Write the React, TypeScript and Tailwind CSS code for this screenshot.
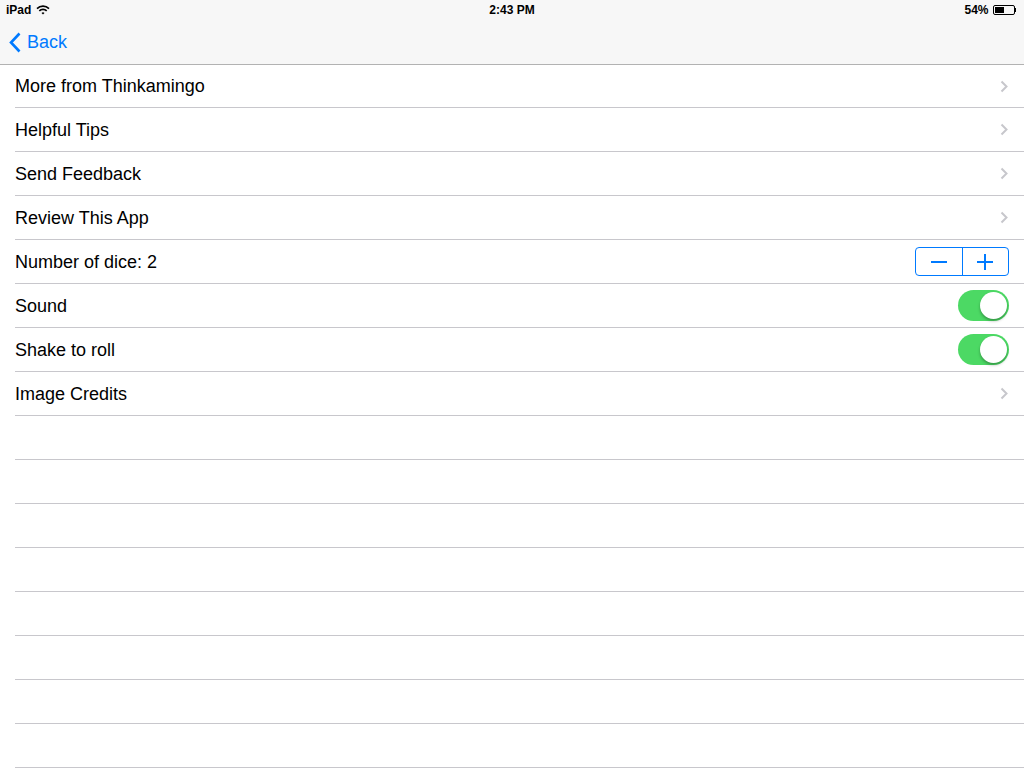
import { useState } from 'react';

const font = { fontFamily: '"Liberation Sans", Arial, sans-serif' };

function Chevron() {
  return (
    <svg width="8" height="13" viewBox="0 0 8 13" className="shrink-0 mr-[1px]">
      <path d="M1.5 1.5 L6.5 6.5 L1.5 11.5" fill="none" stroke="#c7c7cc" strokeWidth="2" strokeLinecap="butt" />
    </svg>
  );
}

function Toggle({ on, onClick }: { on: boolean; onClick: () => void }) {
  return (
    <button
      onClick={onClick}
      className={`relative w-[51px] h-[31px] rounded-full transition-colors ${on ? 'bg-[#4cd964]' : 'bg-[#e5e5ea]'}`}
    >
      <span
        className={`absolute top-[2px] w-[27px] h-[27px] rounded-full bg-white shadow-[0_2px_3px_rgba(0,0,0,0.3)] transition-all ${on ? 'left-[22px]' : 'left-[2px]'}`}
      />
    </button>
  );
}

function Row({ children, first }: { children: React.ReactNode; first?: boolean }) {
  return (
    <div className={`ml-[15px] pr-[15px] flex items-center justify-between border-b border-[#c8c7cc] ${first ? 'h-[43px]' : 'h-[44px]'}`}>
      {children}
    </div>
  );
}

export default function App() {
  const [dice, setDice] = useState(2);
  const [sound, setSound] = useState(true);
  const [shake, setShake] = useState(true);

  const links = ['More from Thinkamingo', 'Helpful Tips', 'Send Feedback', 'Review This App'];

  return (
    <div className="w-[1024px] h-[768px] bg-white overflow-hidden text-black" style={font}>
      <div className="h-[65px] bg-[#f7f7f7] border-b border-[#b2b2b2]">
        {/* status bar */}
        <div className="h-[20px] flex items-center justify-between px-[6px] text-[12px] font-bold relative">
          <div className="flex items-center gap-[5px]">
            <span>iPad</span>
            <svg width="14" height="10" viewBox="0 0 14 10">
              <path d="M1 3.6 A8.5 8.5 0 0 1 13 3.6" fill="none" stroke="#000" strokeWidth="1.6" />
              <path d="M3.3 5.9 A5.2 5.2 0 0 1 10.7 5.9" fill="none" stroke="#000" strokeWidth="1.6" />
              <path d="M5.5 8.1 L7 9.6 L8.5 8.1 A2.1 2.1 0 0 0 5.5 8.1 Z" fill="#000" />
            </svg>
          </div>
          <span className="absolute left-1/2 -translate-x-1/2">2:43 PM</span>
          <div className="flex items-center gap-[4px] pr-[2px]">
            <span>54%</span>
            <div className="flex items-center">
              <div className="w-[22px] h-[10px] border border-black rounded-[2px] p-[1px]">
                <div className="h-full w-[54%] bg-black" />
              </div>
              <div className="w-[1.5px] h-[4px] bg-black" />
            </div>
          </div>
        </div>
        {/* nav bar */}
        <div className="h-[44px] flex items-center pl-[9px] pt-[1px]">
          <button className="flex items-center gap-[6px] text-[#007aff] text-[18px]">
            <svg width="12" height="21" viewBox="0 0 12 21">
              <path d="M10.5 1.5 L2 10.5 L10.5 19.5" fill="none" stroke="#007aff" strokeWidth="2.6" />
            </svg>
            <span>Back</span>
          </button>
        </div>
      </div>

      <div className="text-[18px]">
        {links.map((l, i) => (
          <Row key={l} first={i === 0}>
            <span className="pt-[1px]">{l}</span>
            <Chevron />
          </Row>
        ))}
        <Row>
          <span className="pt-[1px]">Number of dice: {dice}</span>
          <div className="flex w-[94px] h-[29px] border border-[#007aff] rounded-[4px]">
            <button
              onClick={() => setDice(Math.max(1, dice - 1))}
              className="flex-1 flex items-center justify-center border-r border-[#007aff]"
            >
              <span className="block w-[16px] h-[2px] bg-[#007aff]" />
            </button>
            <button onClick={() => setDice(dice + 1)} className="flex-1 flex items-center justify-center relative">
              <span className="block w-[16px] h-[2px] bg-[#007aff]" />
              <span className="absolute block w-[2px] h-[16px] bg-[#007aff]" />
            </button>
          </div>
        </Row>
        <Row>
          <span className="pt-[1px]">Sound</span>
          <Toggle on={sound} onClick={() => setSound(!sound)} />
        </Row>
        <Row>
          <span className="pt-[1px]">Shake to roll</span>
          <Toggle on={shake} onClick={() => setShake(!shake)} />
        </Row>
        <Row>
          <span className="pt-[1px]">Image Credits</span>
          <Chevron />
        </Row>
        {Array.from({ length: 8 }).map((_, i) => (
          <Row key={i}>
            <span />
          </Row>
        ))}
      </div>
    </div>
  );
}
